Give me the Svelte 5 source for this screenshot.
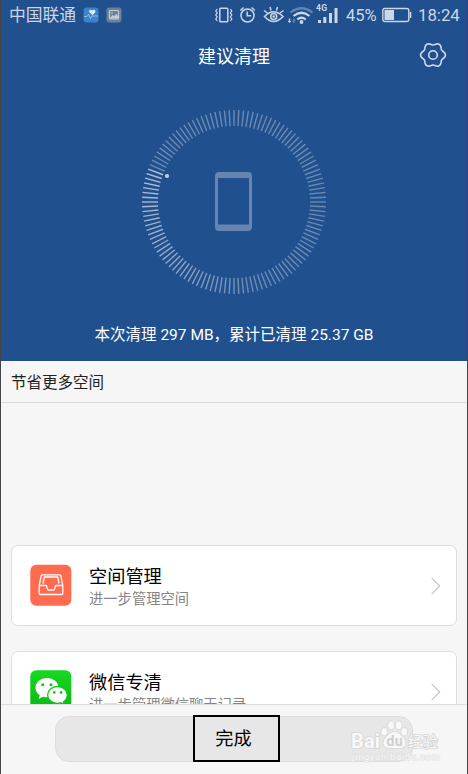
<script>
  const ticks = Array.from({ length: 120 }, (_, i) => {
    const angle = i * 3
    // the sweep starts at 291deg (clock-wise from the top) and fades backwards
    const behind = (291 - angle + 360) % 360
    const opacity = Math.max(0.33, 0.65 - behind * 0.0025)
    return { angle, opacity }
  })

  // six soft lobes round the circle
  const gear = Array.from({ length: 90 }, (_, i) => {
    const a = (i * 4 * Math.PI) / 180
    const r = 11.2 + 1.2 * Math.cos(6 * a)
    return `${(14 + r * Math.cos(a)).toFixed(2)},${(14 + r * Math.sin(a)).toFixed(2)}`
  }).join(' ')

  const cards = [
    { icon: 'inbox', title: '空间管理', text: '进一步管理空间' },
    { icon: 'wechat', title: '微信专清', text: '进一步管理微信聊天记录' }
  ]
</script>

<div class="phone">
  <header>
    <div class="status">
      <span class="carrier">中国联通</span>
      <svg class="app-icon" width="16" height="16" viewBox="0 0 16 16">
        <rect width="15" height="15" x=".5" y=".5" rx="3" fill="#3b82cc" />
        <path d="M9.5 8.3 6.3 5.2C5.2 3.3 7.7 1.7 9 3.5c1.8-1.8 4.5 0 3.1 2z" fill="#dce8f4" />
        <path d="M1 9.5h3l1.5-2 2 4 1.6-2.5H15" fill="none" stroke="#a9cbea" stroke-width=".8" />
      </svg>
      <svg class="app-icon second" width="16" height="16" viewBox="0 0 16 16">
        <rect width="15" height="15" x=".5" y=".5" rx="3" fill="#6d8298" />
        <rect x="3.5" y="3.5" width="9" height="8.5" rx="1" fill="none" stroke="#c3cdd8" stroke-width="1.2" />
        <path d="m4 11 2.5-3 1.5 1.2L10.2 7 12 9v2.5H4z" fill="#c3cdd8" />
        <circle cx="6" cy="6" r=".8" fill="#c3cdd8" />
      </svg>
      <svg class="signals" width="126" height="28" viewBox="0 0 126 28" fill="none" stroke="#ccd7e6" stroke-width="1.5">
        <rect x="5.8" y="7.3" width="8" height="13.5" rx=".8" />
        <path d="m3.2 8-1.4 2 1.4 2-1.4 2 1.4 2-1.4 2 1.4 2M16.4 8l1.4 2-1.4 2 1.4 2-1.4 2 1.4 2-1.4 2" stroke-width="1.3" />
        <circle cx="33.5" cy="14.5" r="6.5" />
        <path d="M33.2 10.5v4.3h4M26.4 9.5l3.2-3M37.6 6.5l3.2 3" />
        <path d="M50.5 15.5q9-9.5 18.5 0-9.3 10-18.5 0z" />
        <circle cx="59.7" cy="15.5" r="3" />
        <circle cx="59.7" cy="15.5" r=".6" />
        <path d="m50 9.5 3.5 2.5M56 6l1 3.5M63.5 6l-1 3.5M69.500 9.500 66 12" />
        <g stroke-width="2.2">
          <path d="M76.5 11.5q11-8.5 22 0" stroke="#6484ad" />
          <path d="M79.5 15q8-6.5 16 0M83.3 18.5q4.2-3.5 8.4 0" />
        </g>
        <g fill="#ccd7e6" stroke="none">
          <circle cx="87.5" cy="21" r="1.9" />
          <path d="M74.800 17.500h1.400v2.500h1.200L75.500 22l-1.900-2h1.200z" />
          <path d="M79.200 22v-2.500H78l1.900-2 1.900 2h-1.200V22z" opacity=".4" />
          <rect x="104" y="19" width="3" height="3" />
          <rect x="109.3" y="16" width="3" height="6" />
          <rect x="115" y="12" width="3" height="10" />
          <rect x="120.5" y="7" width="3" height="15" />
          <text x="102" y="10.3" font-size="8.6" font-weight="700" textLength="11">4G</text>
        </g>
      </svg>
      <span class="percent">45%</span>
      <svg class="battery" width="30" height="16" viewBox="0 0 30 16">
        <rect x=".8" y="1.5" width="26" height="13" rx="2" fill="none" stroke="#ccd7e6" stroke-width="1.4" />
        <rect x="2.5" y="3" width="9.5" height="10" fill="#ccd7e6" />
        <path d="M28.5 5v6" stroke="#ccd7e6" stroke-width="1.6" />
      </svg>
      <span class="time">18:24</span>
    </div>

    <div class="title">
      <h1>建议清理</h1>
      <svg class="gear" width="28" height="28" viewBox="0 0 28 28" fill="none" stroke="#d3dceb" stroke-width="1.6" stroke-linejoin="round">
        <polygon points={gear} />
        <circle cx="14" cy="14" r="4.3" />
      </svg>
    </div>

    <svg class="dial" width="190" height="190" viewBox="-95 -95 190 190">
      {#each ticks as tick}
        <line y1="-76" y2="-92" transform="rotate({tick.angle})" stroke="#fff" stroke-width="1.4" opacity={tick.opacity} />
      {/each}
      <circle cx="-67" cy="-26" r="2.1" fill="#c3d0e3" />
      <path d="M-15-30h29q4 0 4 4v51q0 4-4 4h-29q-4 0-4-4v-51q0-4 4-4zm-1 6v46.500h31V-24z" fill="#6685b1" fill-rule="evenodd" />
    </svg>

    <p class="summary">本次清理 297 MB，累计已清理 25.37 GB</p>
  </header>

  <h2>节省更多空间</h2>

  <main>
    {#each cards as card}
      <div class="card">
        {#if card.icon === 'inbox'}
          <svg class="icon" width="42" height="42" viewBox="0 0 42 42">
            <rect x=".3" y=".8" width="41" height="41" rx="6" fill="#ff6b4f" />
            <g fill="none" stroke="#fff" stroke-width="1.3" stroke-linejoin="round">
              <path d="M12.500 10.800h17q1 0 1.300 1l2 9.500v8q0 1.200-1.200 1.200H10.400q-1.200 0-1.200-1.200v-8l2-9.500q.3-1 1.300-1z" />
              <path d="M13 19.500 14.300 13h13.400l1.300 6.500M9.400 21.500h6.100q1 0 1.300 1 .4 3.500 1.500 3.500h5.400q1.100 0 1.500-3.500.3-1 1.300-1h6.100" />
            </g>
          </svg>
        {:else}
          <svg class="icon" width="42" height="42" viewBox="0 0 42 42">
            <defs>
              <linearGradient id="green" x2="0" y2="1">
                <stop offset="0" stop-color="#17d920" />
                <stop offset="1" stop-color="#07b611" />
              </linearGradient>
            </defs>
            <rect x=".3" y=".3" width="41" height="41" rx="6" fill="url(#green)" />
            <path d="M17 8c-6.500 0-11.500 4.300-11.500 9.700 0 3.200 1.600 5.800 4.200 7.600l-1.100 3.600 4.300-2.200c1.300.4 2.700.6 4.100.6 6.500 0 11.500-4.300 11.500-9.600S23.500 8 17 8z" fill="#fff" />
            <path d="M27.500 16.500c-5.600 0-9.900 3.700-9.900 8.400s4.300 8.400 9.900 8.400c1.200 0 2.300-.2 3.300-.5l3.600 1.900-1-3c2.400-1.600 3.900-4 3.900-6.800 0-4.700-4.200-8.400-9.800-8.400z" fill="#fff" stroke="#0fc618" stroke-width="1.3" />
            <g fill="#0fc618">
              <circle cx="12.7" cy="14.7" r="1.5" />
              <circle cx="21" cy="14.7" r="1.5" />
              <circle cx="24.3" cy="22.4" r="1.3" />
              <circle cx="31" cy="22.4" r="1.3" />
            </g>
          </svg>
        {/if}
        <div class="info">
          <h3>{card.title}</h3>
          <p>{card.text}</p>
        </div>
        <svg class="arrow" width="10" height="18" viewBox="0 0 10 18">
          <path d="m.7.9 8 8.100-8 8.100" fill="none" stroke="#c2c2c2" stroke-width="1.1" />
        </svg>
      </div>
    {/each}
  </main>

  <footer>
    <button><span>完成</span></button>
    <svg class="watermark" width="96" height="46" viewBox="0 0 96 46">
      <g fill="#f8f8f8" stroke="#d6d6d6" stroke-width="1.6" paint-order="stroke">
        <text x="4" y="28" font-size="20" font-weight="700" textLength="29">Bai</text>
        <ellipse cx="37.3" cy="11.7" rx="2.9" ry="3.7" />
        <ellipse cx="44" cy="5.2" rx="2.9" ry="4" />
        <ellipse cx="51.7" cy="5.2" rx="2.9" ry="4" />
        <ellipse cx="57.3" cy="11.7" rx="2.9" ry="3.7" />
        <path d="M47.500 12c5 0 6 3.500 9 6 4 4 2 10-3 10h-12c-5 0-7-6-3-10 3-2.500 4-6 9-6z" />
        <text x="61" y="26.5" font-size="15" textLength="30">经验</text>
      </g>
      <text x="39.5" y="26" font-size="14" font-weight="700" fill="#cfcfcf" textLength="16">du</text>
      <text x="5" y="39.5" font-size="9.5" fill="#f7f7f7" stroke="#dedede" stroke-width="1" paint-order="stroke" textLength="88">jingyan.baidu.com</text>
    </svg>
  </footer>
</div>

<style>
:global(body) {
  margin: 0;
}
.phone {
  display: flex;
  flex-direction: column;
  box-sizing: border-box;
  width: 468px;
  height: 774px;
  overflow: hidden;
  border: solid #454545;
  border-width: 0 1px;
  background: #f6f6f6;
  font-family: Roboto, "Noto Sans CJK SC", sans-serif;
  color: #222;
}
h1, h2, h3, p {
  margin: 0;
  font-weight: 400;
}
svg {
  display: block;
  flex: none;
}
header {
  flex: none;
  height: 361px;
  background: #20508e;
  color: #fff;
}
.status {
  display: flex;
  align-items: center;
  height: 30px;
  padding-left: 8px;
  color: #ccd7e6;
  font-size: 17px;
  white-space: nowrap;
}
.carrier {
  width: 74px;
  font-size: 16.8px;
  line-height: 30px;
}
.app-icon.second {
  margin-left: 7px;
}
.signals {
  margin-left: 92px;
}
.percent {
  width: 36px;
  margin-left: 6px;
  font-size: 16.5px;
}
.battery {
  margin-right: 6px;
}
.time {
  font-size: 16.8px;
}
.title {
  display: grid;
  grid-template-columns: 1fr auto 1fr;
  align-items: center;
  height: 52px;
  padding-right: 20px;
}
h1 {
  grid-column: 2;
  margin-left: 20px;
  font-size: 18px;
  line-height: 54px;
}
.gear {
  justify-self: end;
  margin-bottom: 4px;
}
.dial {
  margin: 25px auto 0;
}
.summary {
  margin-top: 25px;
  font-size: 15.5px;
  line-height: 26px;
  text-align: center;
  white-space: nowrap;
}
h2 {
  flex: none;
  height: 41px;
  padding-left: 10px;
  border-bottom: 1px solid #dadada;
  font-size: 15.5px;
  line-height: 44px;
}
main {
  flex: 1;
  min-height: 0;
  overflow: hidden;
  padding: 142px 10px 0;
}
.card {
  display: flex;
  align-items: center;
  box-sizing: border-box;
  height: 81px;
  margin-bottom: 25px;
  padding: 0 15px 0 18px;
  border: 1px solid #dedede;
  border-radius: 7px;
  background: #fff;
}
.icon {
  margin-bottom: 1px;
}
.info {
  flex: 1;
  margin-left: 17px;
  padding-top: 2px;
}
h3 {
  color: #000;
  font-size: 18.2px;
  line-height: 24px;
}
.info p {
  color: #858585;
  font-size: 14.3px;
  line-height: 20px;
}
footer {
  position: relative;
  flex: none;
  box-sizing: border-box;
  height: 70px;
  padding: 11px 54px 0;
  border-top: 1px solid #dedede;
}
button {
  display: flex;
  justify-content: center;
  width: 358px;
  height: 46px;
  padding: 0;
  border: 1px solid #dedede;
  border-radius: 14px;
  background: #e7e7e7;
  color: #000;
  font-family: inherit;
  font-size: 18.2px;
}
button span {
  box-sizing: border-box;
  width: 87px;
  height: 47px;
  margin: -2px 0 0 4px;
  padding-right: 5px;
  border: 2px solid #000;
  line-height: 43px;
}
.watermark {
  position: absolute;
  left: 346px;
  top: 15px;
}
</style>
